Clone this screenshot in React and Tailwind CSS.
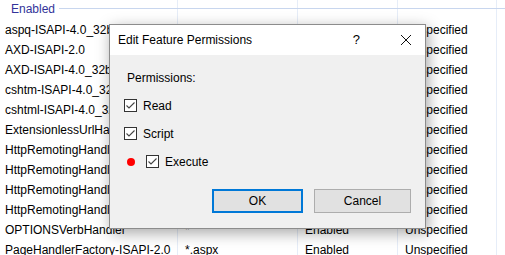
import React from "react";

const rows = [
  ["aspq-ISAPI-4.0_32bit", "*.aspq", "Enabled", "Unspecified"],
  ["AXD-ISAPI-2.0", "*.axd", "Enabled", "Unspecified"],
  ["AXD-ISAPI-4.0_32bit", "*.axd", "Enabled", "Unspecified"],
  ["cshtm-ISAPI-4.0_32bit", "*.cshtm", "Enabled", "Unspecified"],
  ["cshtml-ISAPI-4.0_32bit", "*.cshtml", "Enabled", "Unspecified"],
  ["ExtensionlessUrlHandler-ISAPI-4.0_32bit", "*.", "Enabled", "Unspecified"],
  ["HttpRemotingHandlerFactory-rem-ISAPI-2.0", "*.rem", "Enabled", "Unspecified"],
  ["HttpRemotingHandlerFactory-rem-ISAPI-4.0", "*.rem", "Enabled", "Unspecified"],
  ["HttpRemotingHandlerFactory-soap-ISAPI-2.0", "*.soap", "Enabled", "Unspecified"],
  ["HttpRemotingHandlerFactory-soap-ISAPI-4.0", "*.soap", "Enabled", "Unspecified"],
  ["OPTIONSVerbHandler", "*", "Enabled", "Unspecified"],
  ["PageHandlerFactory-ISAPI-2.0", "*.aspx", "Enabled", "Unspecified"],
];

const Check = ({ label }) => (
  <div className="flex items-center h-[13px]">
    <div className="w-[13px] h-[13px] border border-[#333333] bg-white flex items-center justify-center">
      <svg width="11" height="11" viewBox="0 0 11 11">
        <path d="M1.5 5.5 L4 8 L9.5 2.5" fill="none" stroke="#444" strokeWidth="1.1" />
      </svg>
    </div>
    <span className="ml-[6px]">{label}</span>
  </div>
);

const App = () => {
  return (
    <div
      className="relative w-[505px] h-[255px] overflow-hidden bg-white text-[12px] text-black"
      style={{ fontFamily: '"Segoe UI", "Liberation Sans", sans-serif' }}
    >
      {/* grid lines */}
      <div className="absolute inset-0 flex pointer-events-none">
        <div className="w-[178px] border-r border-[#e6edf8]" />
        <div className="w-[120px] border-r border-[#e6edf8]" />
        <div className="w-[100px] border-r border-[#e6edf8]" />
        <div className="w-[99px] border-r border-[#e6edf8]" />
      </div>

      {/* group header */}
      <div className="relative flex items-center h-[20px] pl-[11px] pb-[3px]">
        <span className="text-[#33339a] leading-none">Enabled</span>
        <div className="flex-1 ml-[4px] border-t border-[#c8d6ee]" />
      </div>

      {/* list rows */}
      <div className="relative">
        {rows.map((r, i) => (
          <div key={i} className="grid grid-cols-[178px_120px_100px_107px] h-[20px] items-center leading-[20px]">
            <div className="pl-[5px] whitespace-nowrap overflow-hidden">{r[0]}</div>
            <div className="pl-[7px] whitespace-nowrap overflow-hidden">{r[1]}</div>
            <div className="pl-[7px] whitespace-nowrap overflow-hidden">{r[2]}</div>
            <div className="pl-[7px] whitespace-nowrap overflow-hidden">{r[3]}</div>
          </div>
        ))}
      </div>

      {/* dialog */}
      <div className="absolute left-[109px] top-[24px] w-[317px] h-[205px] bg-[#f0f0f0] border border-[#8c8c8c] shadow-[2px_4px_14px_rgba(0,0,0,0.35)] flex flex-col">
        <div className="h-[30px] bg-white flex items-center pl-[8px] pr-[13px]">
          <span className="flex-1">Edit Feature Permissions</span>
          <span className="mr-[40px] text-[13px]">?</span>
          <svg width="12" height="12" viewBox="0 0 12 12">
            <path d="M1 1 L11 11 M11 1 L1 11" stroke="#111" strokeWidth="1" />
          </svg>
        </div>
        <div className="relative flex-1">
          <div className="absolute left-[17px] top-[14px]">Permissions:</div>
          <div className="absolute left-[14px] top-[44px] flex flex-col gap-[15px]">
            <Check label="Read" />
            <Check label="Script" />
          </div>
          <div className="absolute left-[17px] top-[100px] flex items-center">
            <div className="w-[8px] h-[8px] rounded-full bg-[#ff0000]" />
            <div className="ml-[11px]">
              <Check label="Execute" />
            </div>
          </div>
          <div className="absolute left-[102px] top-[134px] flex gap-[11px]">
            <button className="w-[91px] h-[24px] bg-[#e1e1e1] border-2 border-[#0078d7]">OK</button>
            <button className="w-[97px] h-[24px] bg-[#e1e1e1] border border-[#adadad]">Cancel</button>
          </div>
        </div>
      </div>
    </div>
  );
};

export default App;
